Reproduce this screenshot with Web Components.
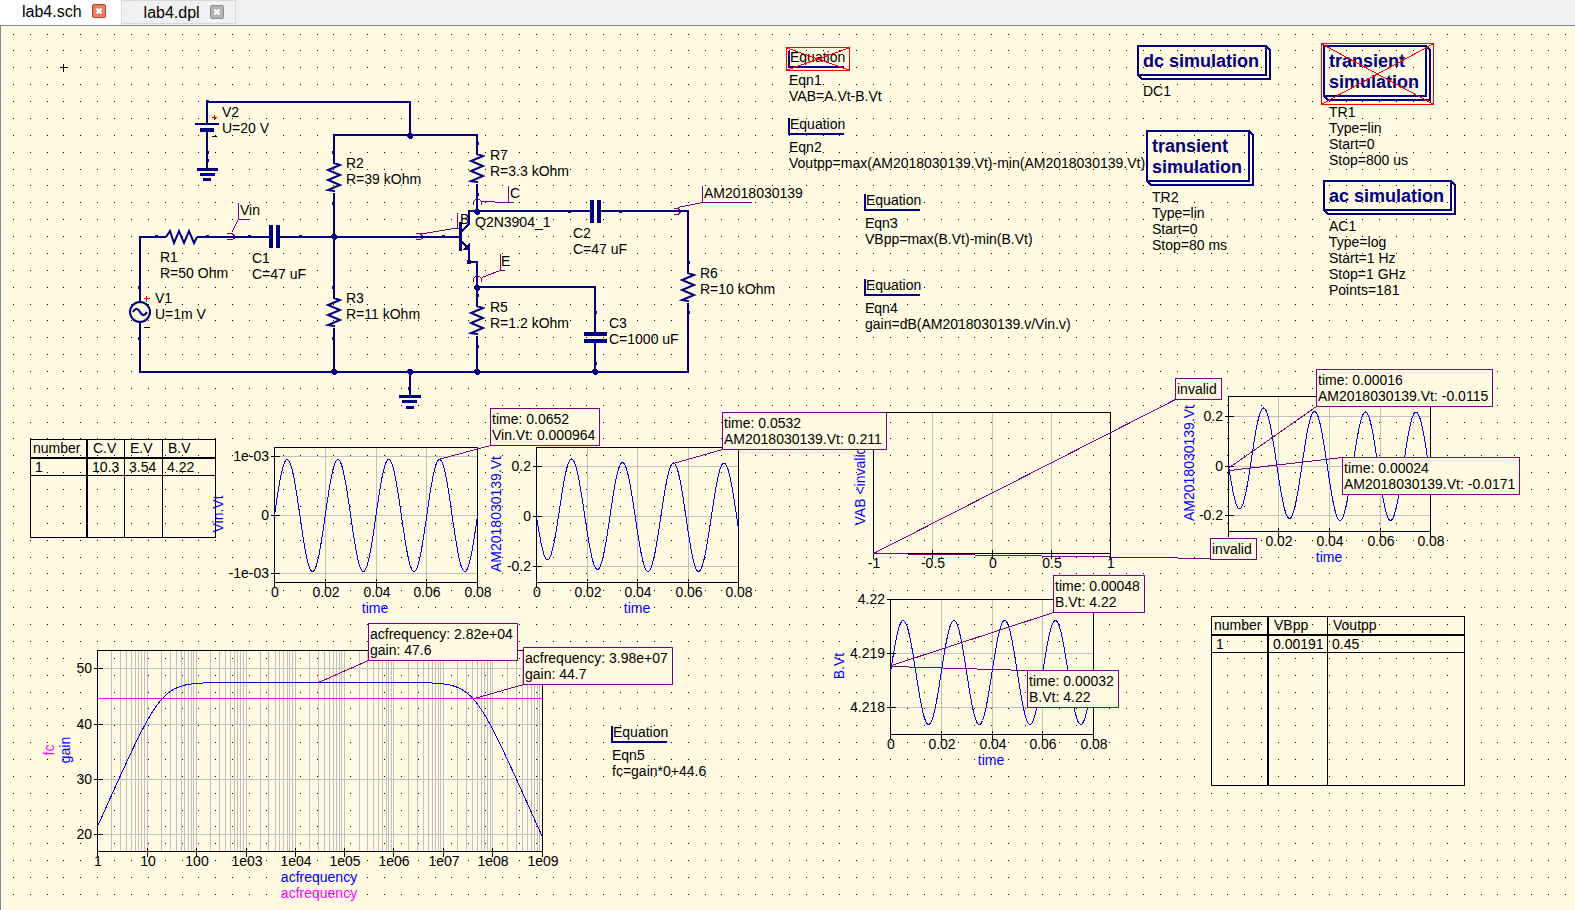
<!DOCTYPE html>
<html lang="en">
<head>
<meta charset="utf-8">
<title>lab4.sch</title>
<style>
  html, body { margin: 0; height: 100%; }
  body { display: flex; flex-direction: column; font: 14px/16px "Liberation Sans", Arial, sans-serif; color: #000; background: #f0f0f0; overflow: hidden; }
</style>
</head>
<body>
<tab-strip>
  <doc-tab active>lab4.sch</doc-tab>
  <doc-tab>lab4.dpl</doc-tab>
</tab-strip>

<schematic-canvas>
  <circuit-wires style="--x:0;--y:25"></circuit-wires>

  <part-label style="--x:222;--y:104">V2<br>U=20 V</part-label>
  <part-label style="--x:346;--y:155">R2<br>R=39 kOhm</part-label>
  <part-label style="--x:490;--y:147">R7<br>R=3.3 kOhm</part-label>
  <part-label style="--x:160;--y:249">R1<br>R=50 Ohm</part-label>
  <part-label style="--x:252;--y:250">C1<br>C=47 uF</part-label>
  <part-label style="--x:155;--y:290">V1<br>U=1m V</part-label>
  <part-label style="--x:346;--y:290">R3<br>R=11 kOhm</part-label>
  <part-label style="--x:475;--y:214">Q2N3904_1</part-label>
  <part-label style="--x:573;--y:225">C2<br>C=47 uF</part-label>
  <part-label style="--x:700;--y:265">R6<br>R=10 kOhm</part-label>
  <part-label style="--x:490;--y:299">R5<br>R=1.2 kOhm</part-label>
  <part-label style="--x:609;--y:315">C3<br>C=1000 uF</part-label>
  <part-label style="--x:240;--y:202">Vin</part-label>
  <part-label style="--x:460;--y:211">B</part-label>
  <part-label style="--x:510;--y:185">C</part-label>
  <part-label style="--x:501;--y:253">E</part-label>
  <part-label style="--x:704;--y:185">AM2018030139</part-label>

  <eqn-block off style="--x:788;--y:49">Eqn1<br>VAB=A.Vt-B.Vt</eqn-block>
  <eqn-block style="--x:788;--y:116">Eqn2<br>Voutpp=max(AM2018030139.Vt)-min(AM2018030139.Vt)</eqn-block>
  <eqn-block style="--x:864;--y:192">Eqn3<br>VBpp=max(B.Vt)-min(B.Vt)</eqn-block>
  <eqn-block style="--x:864;--y:277">Eqn4<br>gain=dB(AM2018030139.v/Vin.v)</eqn-block>
  <eqn-block style="--x:611;--y:724">Eqn5<br>fc=gain*0+44.6</eqn-block>

  <sim-block style="--x:1137;--y:45"><span slot="title">dc simulation</span>DC1</sim-block>
  <sim-block off style="--x:1323;--y:45"><span slot="title">transient<br>simulation</span>TR1<br>Type=lin<br>Start=0<br>Stop=800 us</sim-block>
  <sim-block style="--x:1146;--y:130"><span slot="title">transient<br>simulation</span>TR2<br>Type=lin<br>Start=0<br>Stop=80 ms</sim-block>
  <sim-block style="--x:1323;--y:180"><span slot="title">ac simulation</span>AC1<br>Type=log<br>Start=1 Hz<br>Stop=1 GHz<br>Points=181</sim-block>

  <data-table style="--x:30;--y:439;--w:186px;--h:99px" cols="57 37 38 52" head="number|C.V|E.V|B.V" row="1|10.3|3.54|4.22"></data-table>
  <data-table style="--x:1211;--y:616;--w:254px;--h:170px" cols="57 59 136" head="number|VBpp|Voutpp" row="1|0.00191|0.45"></data-table>

  <wave-chart style="--x:274;--y:447" w="203" h="135" curve="vin" xt="0@0 51@0.02 102@0.04 152@0.06 203@0.08" yt="9@1e-03 68@0 126@-1e-03" xlabel="time" ylabel="Vin.Vt" ydx="-51"></wave-chart>
  <wave-chart style="--x:536;--y:447" w="202" h="135" curve="out" xt="0@0 51@0.02 101@0.04 152@0.06 202@0.08" yt="19@0.2 69@0 119@-0.2" xlabel="time" ylabel="AM2018030139.Vt" ydx="-35"></wave-chart>
  <wave-chart style="--x:873;--y:412" w="237" h="141" xt="0@-1 59@-0.5 119@0 178@0.5 237@1" yt="" ylabel="VAB &lt;invalid&gt;" ydx="-8"></wave-chart>
  <wave-chart style="--x:1228;--y:396" w="202" h="135" curve="out" xt="0@ 50@0.02 101@0.04 152@0.06 202@0.08" yt="20@0.2 70@0 119@-0.2" xlabel="time" ylabel="AM2018030139.Vt" ydx="-34"></wave-chart>
  <wave-chart style="--x:890;--y:599" w="203" h="135" curve="base" xt="0@0 51@0.02 102@0.04 152@0.06 203@0.08" yt="0@4.22 54@4.219 108@4.218" xlabel="time" ylabel="B.Vt" ydx="-46"></wave-chart>
  <wave-chart log style="--x:97;--y:650" w="445" h="201" curve="gain" xt="0@1 50@10 99@100 149@1e03 198@1e04 247@1e05 296@1e06 346@1e07 395@1e08 445@1e09" yt="18@50 74@40 129@30 184@20" xlabel="acfrequency" xlabel2="acfrequency" ylabel="gain" ydx="-27" ylabel2="fc" ydx2="-43"></wave-chart>

  <data-marker style="--x:490;--y:408" line="0,37 -52,51">time: 0.0652<br>Vin.Vt: 0.000964</data-marker>
  <data-marker style="--x:722;--y:412" line="0,37 -49,51">time: 0.0532<br>AM2018030139.Vt: 0.211</data-marker>
  <data-marker style="--x:1316;--y:369" line="0,37 -87,98">time: 0.00016<br>AM2018030139.Vt: -0.0115</data-marker>
  <data-marker style="--x:1342;--y:457" line="0,0 -113,13">time: 0.00024<br>AM2018030139.Vt: -0.0171</data-marker>
  <data-marker style="--x:1175;--y:378" line="0,21 -302,175">invalid</data-marker>
  <data-marker style="--x:1210;--y:538" line="0,20 -337,15">invalid</data-marker>
  <data-marker style="--x:1053;--y:575" line="0,37 -162,90">time: 0.00048<br>B.Vt: 4.22</data-marker>
  <data-marker style="--x:1027;--y:670" line="0,0 -136,-4">time: 0.00032<br>B.Vt: 4.22</data-marker>
  <data-marker style="--x:368;--y:623" line="0,37 -50,59">acfrequency: 2.82e+04<br>gain: 47.6</data-marker>
  <data-marker style="--x:523;--y:647" line="0,37 -49,51">acfrequency: 3.98e+07<br>gain: 44.7</data-marker>
</schematic-canvas>

<script>
function define(name, html, setup) {
  customElements.define(name, class extends HTMLElement {
    connectedCallback() {
      if (this.shadowRoot) return;
      this.attachShadow({ mode: 'open' }).innerHTML = html;
      if (setup) setup(this, this.shadowRoot);
    }
  });
}

define('tab-strip', `
<style>
  :host { display: flex; align-items: flex-start; flex: none; height: 25px; background: #f0f0f0; }
</style><slot></slot>`);

define('doc-tab', `
<style>
  :host { display: flex; align-items: center; gap: 10px; box-sizing: border-box; height: 24px; padding: 0 11px 0 22px; border: 1px solid #d9d9d9; font-size: 16px; line-height: 18px; }
  :host([active]) { height: 25px; padding: 0 15px 3px 22px; border: 0; background: #fff; }
  button { font: inherit; color: inherit; border: 0; padding: 0; background: none; }
  .t { margin-top: 2px; }
  .x { display: block; width: 14px; height: 14px; }
  svg { display: block; }
  rect { fill: #b4b4b4; stroke: #8f8f8f; }
  :host([active]) rect { fill: #e58060; stroke: #d03a28; }
</style>
<button class="t"><slot></slot></button>
<button class="x" aria-label="Close"><svg width="14" height="14"><rect x=".5" y=".5" width="13" height="13" rx="1.5"/><path d="M4.5 4.5l5 5M9.5 4.5l-5 5" stroke="#fff" stroke-width="2.4"/></svg></button>`);

/* Free canvas: every child sits at (--x, --y), measured from the window's top left corner. */
define('schematic-canvas', `
<style>
  :host { display: block; position: relative; flex: 1; min-height: 0; overflow: hidden; background: #fffae1; box-shadow: inset 1px 1px #828790; }
  #grid { position: absolute; left: 0; top: 0; width: 100%; height: 100%; }
  ::slotted(*) { position: absolute; left: calc(var(--x) * 1px); top: calc((var(--y) - 25) * 1px); }
</style>
<svg id="grid" shape-rendering="crispEdges"><path id="dots" fill="#000"/><path d="M60 42.5h8M63.5 39v8" stroke="#000"/></svg>
<slot></slot>`, (host, root) => {
  const draw = () => {
    let d = '';
    const step = 16.87;
    for (let y = 9.08; y < host.clientHeight; y += step)
      for (let x = 13.36; x < host.clientWidth; x += step)
        d += `M${Math.floor(x)} ${Math.floor(y)}h1v1h-1z`;
    root.getElementById('dots').setAttribute('d', d);
  };
  draw();
  addEventListener('resize', draw);
});

define('part-label', `<style>:host { display: block; white-space: nowrap; }</style><slot></slot>`);

define('circuit-wires', `
<style>
  :host { display: block; }
  svg { display: block; overflow: visible; }
  .w { fill: none; stroke: #000080; stroke-width: 2; }
  .f { fill: #000080; }
  .p { fill: none; stroke: #800080; }
</style>
<svg width="1" height="1" viewBox="0 25 1 1" shape-rendering="crispEdges">
  <g class="p">
    <path d="M238.5 203v17M238 219.5h12M238 220l-6 12M457.5 213v15M457 228.5h4M457 228l-36 6M508.5 186v17M514 202.5h-6l-26-1M500.5 254v17M505 270.5h-5l-18 7M702.5 186v17M752 202.5h-50l-24 5"/>
    <path d="M227 233.5h5l2 2v3l-2 1h-5M416 233.5h4l2 2v3l-2 1h-4M473.500 205v-3l2-3h4l2 3v3M473.500 282v-3l2-3h4l2 3v3M674 208.500h4l2 2v2l-2 2h-4"/>
  </g>
  <g class="w">
    <path d="M207 124V102H410V135M207 130V169M195 124h24M334 162V135H477V153M334 193V297M334 328V372M477 184V211M468 211H590M601 211H688V272M688 303V372H140V323M140 302V237H166M197 237H269M280 237H460M469 262H477V305M477 336V372M477 287H595V332M595 343V372M410 372V396"/>
    <path d="M461 232L469 224V211M461 241L469 249V262"/>
    <path shape-rendering="auto" d="M166 237l4-6 4 12 5-12 5 12 5-12 5 12 3-6"/>
    <circle shape-rendering="auto" cx="140" cy="312" r="10"/>
    <path shape-rendering="auto" d="M133 312c2-4 5-4 7 0s5 4 7 0"/>
  </g>
  <g id="zig" class="w" shape-rendering="auto"></g>
  <path class="f" d="M200 128h14v4h-14zM197 168h21v3h-21zM200 173h15v3h-15zM203 178h8v3h-8z
    M399 395h22v3h-22zM402 400h15v3h-15zM406 406h8v3h-8z
    M269 225h4v23h-4zM276 225h4v23h-4zM590 200h4v23h-4zM597 200h4v23h-4zM584 332h23v4h-23zM584 339h23v4h-23z
    M459 222h3v29h-3zM463 250l7 0 0-8z
    M206 100h3v3h-3zM206 151h3v3h-3zM206 159h3v3h-3zM467 260h4v4h-4z
    M155 235h3v3h-3zM206 235h3v3h-3zM248 235h3v3h-3zM299 235h3v3h-3zM442 235h3v3h-3zM568 210h3v3h-3zM619 210h3v3h-3z"/>
  <path id="pins" class="f"/>
  <path d="M212 117.500h5M214.500 115v5M144 298.500h6M146.500 296v6" stroke="#f00"/>
  <path d="M212 136.500h5M144 327.500h6" stroke="#000"/>
</svg>`, (host, root) => {
  root.getElementById('zig').innerHTML = [[334, 162], [334, 297], [477, 153], [477, 305], [688, 272]]
    .map(([x, y]) => `<path d="M${x} ${y}v1l6 2-12 5 12 5-12 5 12 5-12 5 6 1v1"/>`).join('');
  const pins = [[334, 152], [334, 203], [334, 287], [334, 338], [140, 287], [140, 338], [410, 388],
    [478, 143], [478, 194], [478, 295], [478, 346], [596, 312], [596, 363], [689, 262], [689, 312]]
    .map(([x, y]) => `M${x - 2} ${y - 1}h3v3h-3z`).join('');
  const nodes = [[410, 135], [334, 236], [334, 371], [410, 371], [477, 371], [595, 371], [477, 211], [477, 287]]
    .map(([x, y]) => `M${x - 1} ${y - 2}h2l2 1v3l-2 2h-2l-2-2v-3z`).join('');
  root.getElementById('pins').setAttribute('d', pins + nodes);
});

define('eqn-block', `
<style>
  :host { display: block; white-space: nowrap; }
  .m { position: relative; width: 54px; height: 17px; padding-left: 2px; border-bottom: 2px solid #000080; background: linear-gradient(#000080, #000080) 0 100% / 2px 15px no-repeat; margin-bottom: 4px; }
  .p { padding-left: 1px; }
  svg { display: none; position: absolute; left: -2px; top: -2px; }
  :host([off]) svg { display: block; }
</style>
<div class="m">Equation<svg width="64" height="24" shape-rendering="crispEdges" fill="none" stroke="#f00"><path d="M.5.5h63v23h-63zM1 1l62 22M1 23l62-22"/></svg></div>
<div class="p"><slot></slot></div>`);

define('sim-block', `
<style>
  :host { display: block; white-space: nowrap; }
  .box { position: relative; width: fit-content; padding: 4px 6px 2px 4px; border: 2px solid #000080; margin-bottom: 7px; font-weight: bold; font-size: 18px; line-height: 21px; color: #000080; }
  .p { padding-left: 6px; }
  svg { position: absolute; left: -2px; top: -2px; overflow: visible; }
  .off { display: none; stroke: #f00; stroke-width: 1; }
  :host([off]) .off { display: block; }
</style>
<div class="box"><slot name="title"></slot><svg width="1" height="1" shape-rendering="crispEdges" fill="none" stroke="#000080" stroke-width="2"><path class="edge"/><path class="off"/></svg></div>
<div class="p"><slot></slot></div>`, (host, root) => {
  const box = root.querySelector('.box'), w = box.offsetWidth, h = box.offsetHeight;
  root.querySelector('.edge').setAttribute('d', `M${w - 1} 1l4 4V${h + 3}H5L1 ${h - 1}`);
  root.querySelector('.off').setAttribute('d', `M-1.5-1.5H${w + 6.5}V${h + 7.5}H-1.5zM-1-1L${w + 6} ${h + 7}M-1 ${h + 7}L${w + 6}-1`);
});

define('data-table', `
<style>
  :host { display: block; width: var(--w); height: var(--h); }
  table { box-sizing: border-box; width: 100%; height: 100%; table-layout: fixed; border: 1px solid #000; border-collapse: separate; border-spacing: 0; }
  th, td { font-weight: normal; text-align: left; vertical-align: top; padding: 0 0 0 5px; border-right: 1px solid #000; white-space: nowrap; box-sizing: border-box; }
  th:first-child { padding-left: 2px; }
  td { padding-left: 4px; }
  th { height: 19px; border-bottom: 2px solid #000; }
  tr > :first-child { border-right-width: 2px; }
  tr > :last-child { border-right: 0; }
  .v td { height: 17px; line-height: 16px; border-bottom: 1px solid #000; }
</style>
<table><colgroup></colgroup><thead><tr></tr></thead><tbody><tr class="v"></tr><tr class="e"></tr></tbody></table>`, (host, root) => {
  const cells = (name, tag) => host.getAttribute(name).split('|').map(t => `<${tag}>${t}</${tag}>`).join('');
  root.querySelector('colgroup').innerHTML = host.getAttribute('cols').split(' ').map(c => `<col style="width:${c}px">`).join('');
  root.querySelector('thead tr').innerHTML = cells('head', 'th');
  root.querySelector('.v').innerHTML = cells('row', 'td');
  root.querySelector('.e').innerHTML = '<td></td>'.repeat(host.getAttribute('cols').split(' ').length);
});

const OUT_EXTREMA = [[11, 112.5], [35, 11.5], [61, 122], [86, 15], [111.5, 124], [137, 15.5], [162, 124], [187.5, 15.5], [213, 124]];
const CURVES = {
  vin: x => 68 - 56 * Math.sin(x / 50.75 * 2 * Math.PI),
  base: x => 73 - 52 * Math.sin(x / 50.75 * 2 * Math.PI),
  out: x => {
    if (x < 11) return 69 + 43.5 * Math.sin(Math.PI / 2 * x / 11);
    const i = OUT_EXTREMA.findIndex(p => p[0] > x), [x0, y0] = OUT_EXTREMA[i - 1], [x1, y1] = OUT_EXTREMA[i];
    return y0 + (y1 - y0) * (1 - Math.cos(Math.PI * (x - x0) / (x1 - x0))) / 2;
  },
  gain: x => {
    const f = 10 ** (x / 445 * 9);
    return 32 + 55.3 * Math.log10((1 + (20 / f) ** 2) * (1 + (f / 4e7) ** 2));
  }
};

define('wave-chart', `
<style>
  :host { display: block; }
  svg { display: block; overflow: visible; }
  .l { fill: none; stroke-width: 1; shape-rendering: crispEdges; }
  .x { text-anchor: middle; } .y { text-anchor: end; }
  .b { fill: #00f; text-anchor: middle; } .m { fill: #f0f; text-anchor: middle; }
</style>
<svg></svg>`, (host, root) => {
  const a = n => host.getAttribute(n) || '';
  const w = +a('w'), h = +a('h');
  const ticks = n => a(n).split(' ').filter(Boolean).map(t => t.split('@'));
  const esc = s => s.replace(/</g, '&lt;');
  const xs = ticks('xt'), ys = ticks('yt');
  let grid = '', tick = '', text = '', curve = '';
  if (host.hasAttribute('log')) {
    for (let d = 0; d < 9; d++) for (let k = 2; k < 10; k++) grid += `M${Math.floor(w / 9 * (d + Math.log10(k)))} 0V${h}`;
  }
  for (const [p, t] of xs) {
    if (p > 0 && p < w) grid += `M${p} 0V${h}`;
    tick += `M${p} ${h - 4}v9`;
    if (t) text += `<text class="x" x="${+p + 1}" y="${h + 15}">${t}</text>`;
  }
  for (const [p, t] of ys) {
    if (p > 0) grid += `M0 ${p}H${w}`;
    tick += `M-4 ${p}h9`;
    text += `<text class="y" x="-5" y="${+p + 5}">${t}</text>`;
  }
  if (CURVES[a('curve')]) {
    for (let x = 0; x <= w; x += .5) curve += `${x ? 'L' : 'M'}${x} ${CURVES[a('curve')](x).toFixed(2)}`;
  }
  const side = (cls, n, dx) => n && (text += `<text class="${cls}" transform="translate(${dx} ${Math.floor(h / 2)}) rotate(-90)">${esc(n)}</text>`);
  side('b', a('ylabel'), a('ydx'));
  side('m', a('ylabel2'), a('ydx2'));
  const mid = Math.floor(w / 2);
  if (a('xlabel')) text += `<text class="b" x="${mid}" y="${h + 31}">${a('xlabel')}</text>`;
  if (a('xlabel2')) text += `<text class="m" x="${mid}" y="${h + 47}">${a('xlabel2')}</text>`;
  const svg = root.querySelector('svg');
  svg.setAttribute('width', w);
  svg.setAttribute('height', h);
  svg.innerHTML = `<g class="l" transform="translate(.5 .5)"><path d="${grid}" stroke="#c0c0c0"/><path d="M0 0H${w}V${h}H0z${tick}" stroke="#000"/>
    <path d="${curve}" stroke="#00f"/>${host.hasAttribute('log') ? `<path d="M0 48H${w}" stroke="#f0f"/>` : ''}</g>${text}`;
});

define('data-marker', `
<style>
  :host { display: block; box-sizing: border-box; padding: 2px 4px 2px 1px; border: 1px solid #800080; background: #fffae1; white-space: nowrap; }
  svg { position: absolute; left: -1px; top: -1px; overflow: visible; }
</style>
<slot></slot><svg width="1" height="1" shape-rendering="crispEdges"><polyline transform="translate(.5 .5)" fill="none" stroke="#800080"/></svg>`, (host, root) => {
  root.querySelector('polyline').setAttribute('points', host.getAttribute('line'));
});
</script>
</body>
</html>
